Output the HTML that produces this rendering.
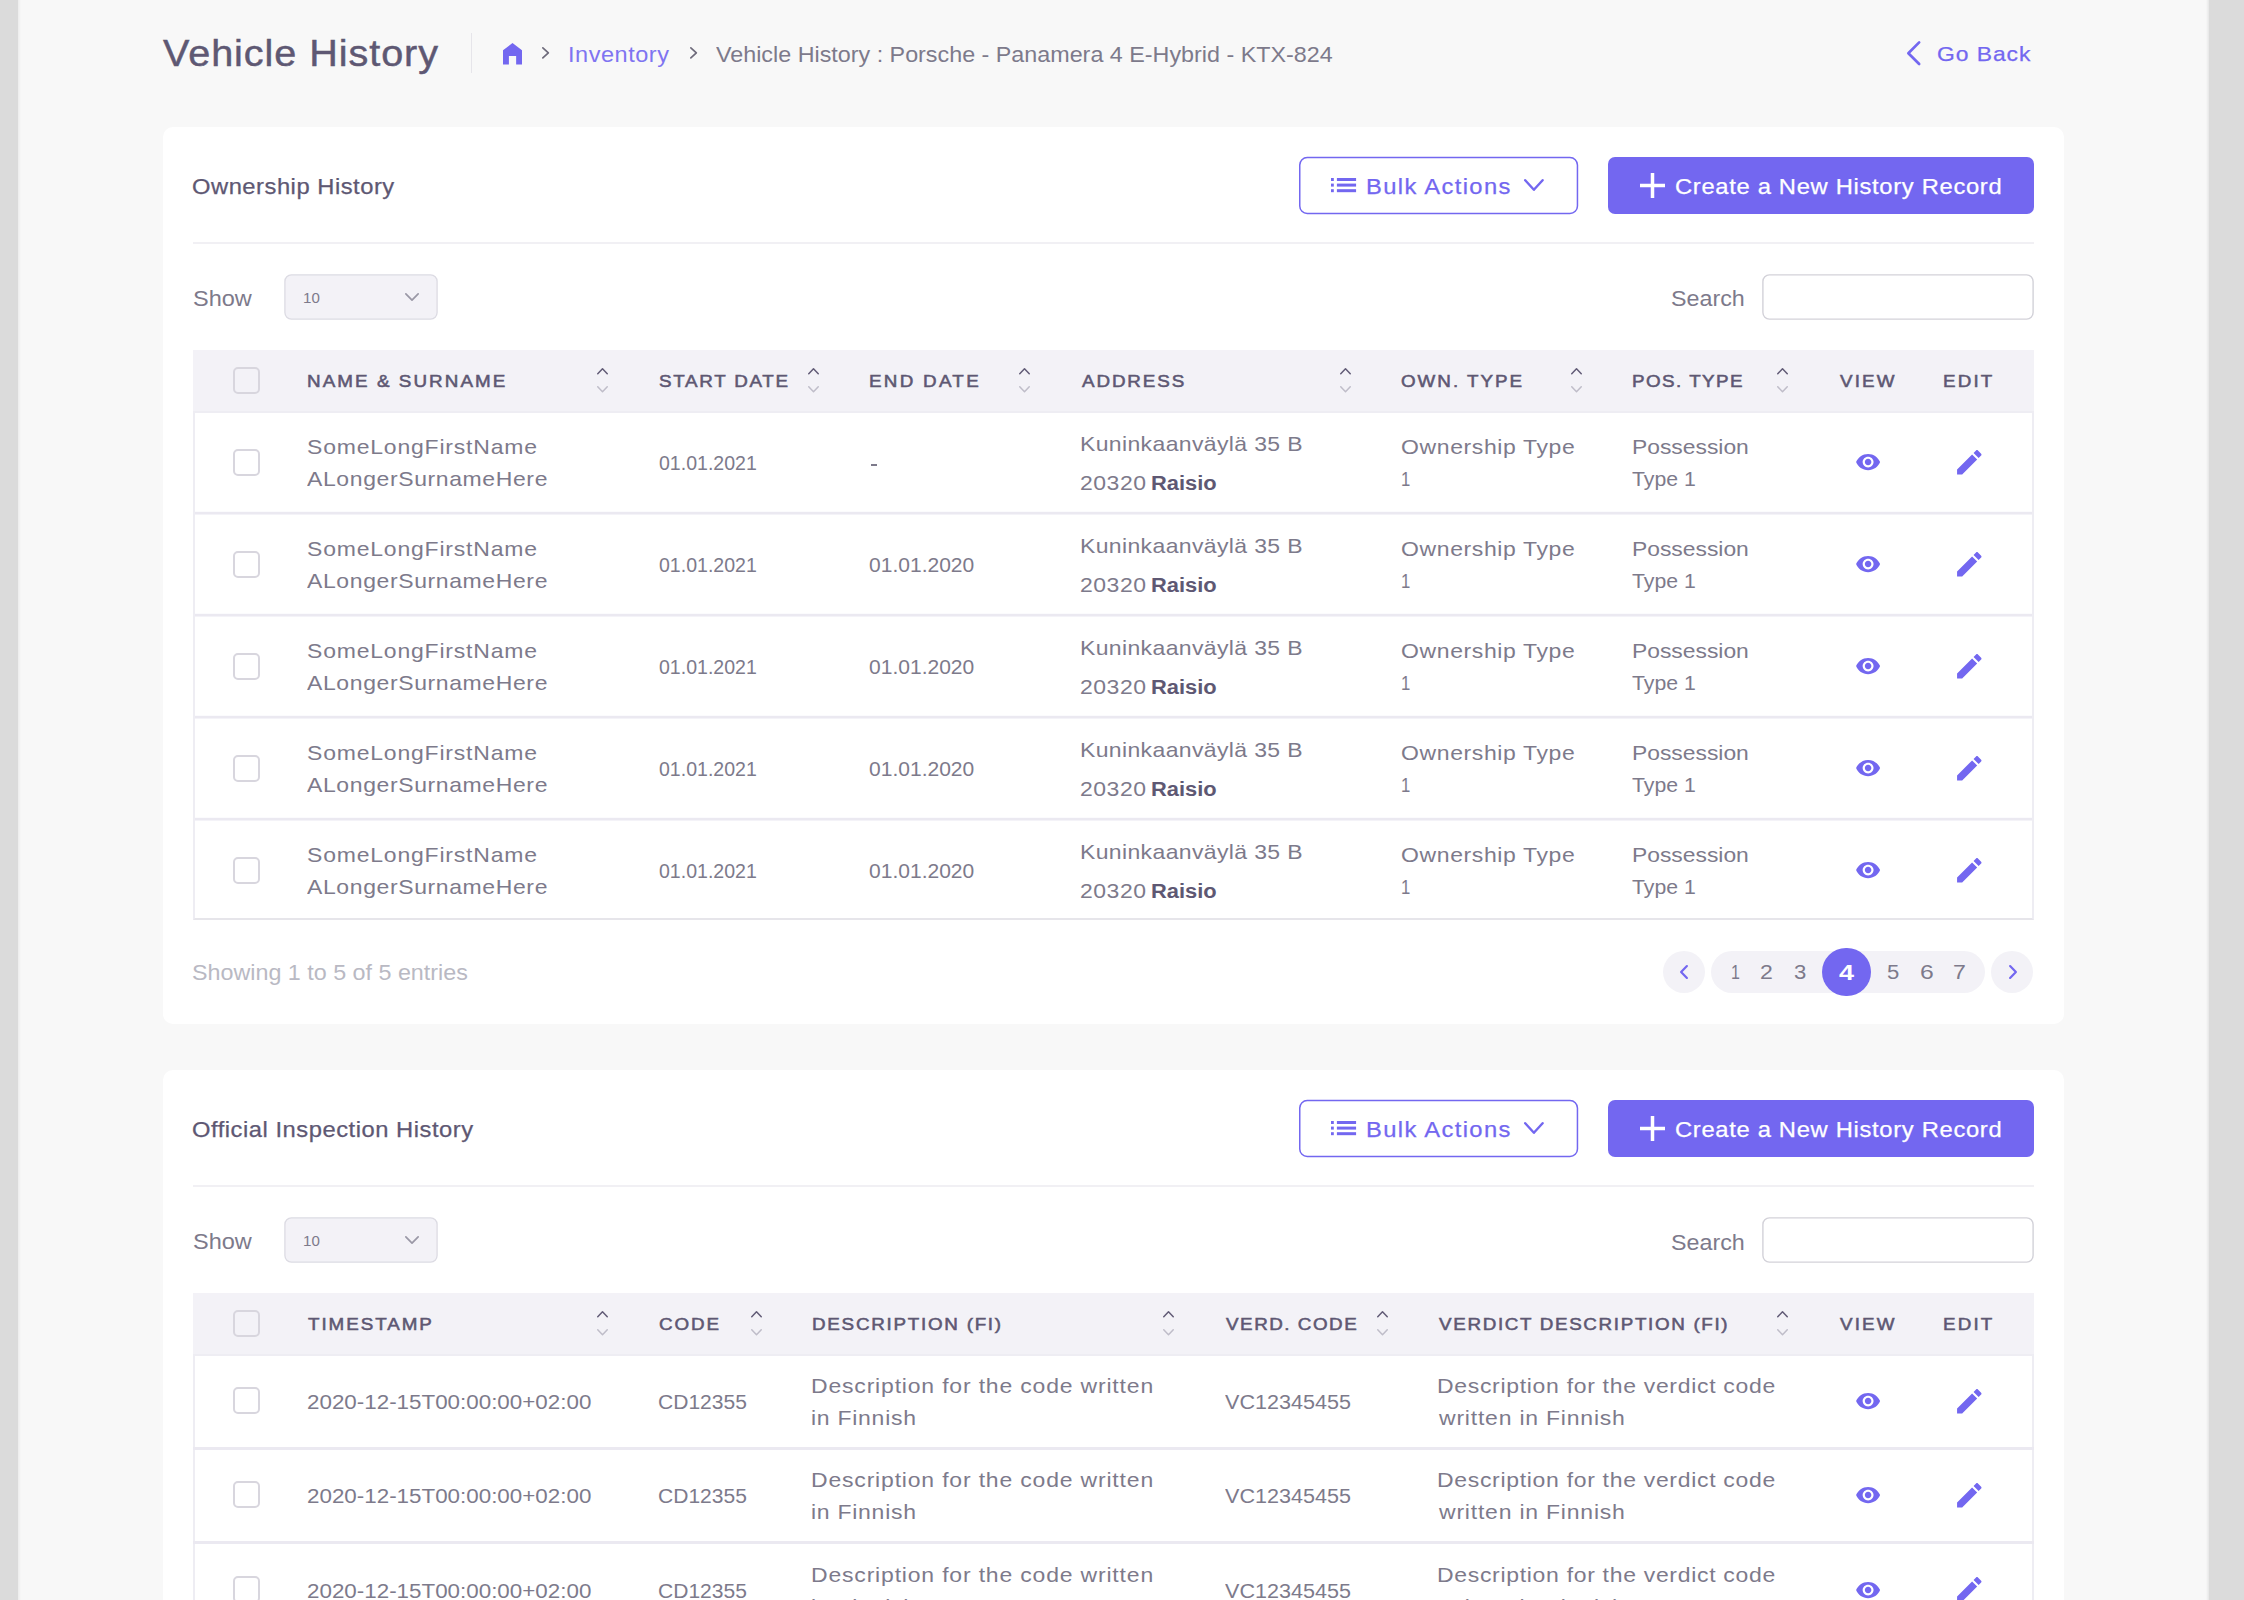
<!DOCTYPE html>
<html><head><meta charset="utf-8"><title>Vehicle History</title>
<style>
html,body{margin:0;padding:0;}
body{width:2244px;height:1600px;overflow:hidden;position:relative;background:#f8f8f8;font-family:"Liberation Sans",sans-serif;}
#p{position:absolute;left:0;top:0;width:2244px;height:1600px;overflow:hidden;}
#p>div,#p>svg,#p>span{position:absolute;display:block;}
.t{white-space:nowrap;line-height:1;transform-origin:0 50%;}
svg{overflow:visible;}
</style></head><body><div id="p">
<div style="left:0px;top:0px;width:18px;height:1600px;background:#dbdbdb;"></div>
<div style="left:2208.5px;top:0px;width:35.5px;height:1600px;background:#dbdbdb;"></div>
<div style="left:18px;top:0px;width:3px;height:1600px;background:linear-gradient(90deg,#ececec,#f8f8f8);"></div>
<div style="left:2205.5px;top:0px;width:3.0px;height:1600px;background:linear-gradient(90deg,#f8f8f8,#e6e6e6);"></div>
<span class="t" style="left:163.08px;top:36.00px;font-size:36px;color:#5e5873;font-weight:400;letter-spacing:0.852px;transform:scaleX(1.1000);-webkit-text-stroke:0.45px #5e5873;">Vehicle History</span>
<div style="left:470.5px;top:32.5px;width:1.5px;height:40.0px;background:#e6e5ea;"></div>
<svg style="left:503px;top:42.6px;" width="19" height="21.4" viewBox="0 0 19 21.4"><path d="M9.5,0 L19,7.2 V21.4 H13.15 V13 H5.9 V21.4 H0 V7.2 Z" fill="#7367f0"/></svg>
<svg style="left:542.4px;top:47.3px;" width="7.2000000000000455" height="11.800000000000004" viewBox="0 0 7.2000000000000455 11.800000000000004"><path d="M0.85,0.85 L6.350000000000046,5.900000000000002 L0.85,10.950000000000005" fill="none" stroke="#6e6b7b" stroke-width="1.7" stroke-linecap="round" stroke-linejoin="round"/></svg>
<span class="t" style="left:568.40px;top:45.00px;font-size:21.4px;color:#7f74f1;font-weight:400;letter-spacing:0.478px;transform:scaleX(1.1000);">Inventory</span>
<svg style="left:689.6px;top:47.3px;" width="7.199999999999932" height="11.800000000000004" viewBox="0 0 7.199999999999932 11.800000000000004"><path d="M0.85,0.85 L6.349999999999932,5.900000000000002 L0.85,10.950000000000005" fill="none" stroke="#6e6b7b" stroke-width="1.7" stroke-linecap="round" stroke-linejoin="round"/></svg>
<span class="t" style="left:715.89px;top:44.00px;font-size:21.6px;color:#7d7a8b;font-weight:400;letter-spacing:0.000px;transform:scaleX(1.0794);">Vehicle History : Porsche - Panamera 4 E-Hybrid - KTX-824</span>
<svg style="left:1907px;top:41px;" width="13.5" height="24.400000000000006" viewBox="0 0 13.5 24.400000000000006"><path d="M12.15,1.35 L1.35,12.200000000000003 L12.15,23.050000000000004" fill="none" stroke="#7367f0" stroke-width="2.7" stroke-linecap="round" stroke-linejoin="round"/></svg>
<span class="t" style="left:1936.70px;top:44.00px;font-size:20.8px;color:#7367f0;font-weight:400;letter-spacing:0.867px;transform:scaleX(1.1000);-webkit-text-stroke:0.25px #7367f0;">Go Back</span>
<div style="left:163px;top:126.5px;width:1901px;height:897.0px;background:#fff;border-radius:10px;"></div>
<span class="t" style="left:191.90px;top:176.00px;font-size:21.6px;color:#5e5873;font-weight:400;letter-spacing:0.464px;transform:scaleX(1.1000);-webkit-text-stroke:0.25px #5e5873;">Ownership History</span>
<svg style="left:1299px;top:157px;" width="279" height="57" viewBox="0 0 279 57"><rect x="0.75" y="0.6" width="277.7" height="55.8" rx="7.5" fill="#fff" stroke="#7367f0" stroke-width="1.5"/></svg>
<svg style="left:1331px;top:178.4px;" width="25.1" height="14.2" viewBox="0 0 25.1 14.2"><rect x="0" y="0" width="2.8" height="3" fill="#7367f0"/><rect x="5.9" y="0" width="19.2" height="3" fill="#7367f0"/><rect x="0" y="5.6" width="2.8" height="3" fill="#7367f0"/><rect x="5.9" y="5.6" width="19.2" height="3" fill="#7367f0"/><rect x="0" y="11.2" width="2.8" height="3" fill="#7367f0"/><rect x="5.9" y="11.2" width="19.2" height="3" fill="#7367f0"/></svg>
<span class="t" style="left:1366.02px;top:176.00px;font-size:21.6px;color:#7367f0;font-weight:400;letter-spacing:1.239px;transform:scaleX(1.1000);-webkit-text-stroke:0.25px #7367f0;">Bulk Actions</span>
<svg style="left:1524px;top:179.3px;" width="19.799999999999955" height="12.0" viewBox="0 0 19.799999999999955 12.0"><path d="M1.2,1.2 L9.899999999999977,10.8 L18.599999999999955,1.2" fill="none" stroke="#7367f0" stroke-width="2.4" stroke-linecap="round" stroke-linejoin="round"/></svg>
<div style="left:1608px;top:157px;width:426px;height:57px;border-radius:7px;background:#7367f0;"></div>
<svg style="left:1639.6px;top:172.8px;" width="25" height="25" viewBox="0 0 25 25"><rect x="10.75" y="0" width="3.5" height="25" fill="#fff"/><rect x="0" y="10.75" width="25" height="3.5" fill="#fff"/></svg>
<span class="t" style="left:1674.79px;top:176.00px;font-size:21.6px;color:#fff;font-weight:400;letter-spacing:0.621px;transform:scaleX(1.1000);-webkit-text-stroke:0.25px #fff;">Create a New History Record</span>
<div style="left:193px;top:242px;width:1841px;height:2px;background:#f1f0f4;"></div>
<span class="t" style="left:192.91px;top:288.00px;font-size:21.6px;color:#7d7a8b;font-weight:400;letter-spacing:-0.000px;transform:scaleX(1.0887);">Show</span>
<svg style="left:284px;top:274px;" width="154" height="46" viewBox="0 0 154 46"><rect x="0.9" y="0.9" width="152.2" height="44.2" rx="6.5" fill="#f3f2f7" stroke="#dcdbe3" stroke-width="1.3"/></svg>
<span class="t" style="left:302.83px;top:290.00px;font-size:15.5px;color:#7d7a8b;font-weight:400;letter-spacing:0.000px;transform:scaleX(0.9740);">10</span>
<svg style="left:405px;top:293.2px;" width="14" height="8.0" viewBox="0 0 14 8.0"><path d="M0.85,0.85 L7.0,7.15 L13.15,0.85" fill="none" stroke="#9a98a6" stroke-width="1.7" stroke-linecap="round" stroke-linejoin="round"/></svg>
<span class="t" style="left:1671.42px;top:288.00px;font-size:21.6px;color:#7d7a8b;font-weight:400;letter-spacing:0.000px;transform:scaleX(1.0773);">Search</span>
<svg style="left:1762px;top:274px;" width="272" height="46" viewBox="0 0 272 46"><rect x="0.9" y="0.9" width="270.2" height="44.2" rx="6.5" fill="#fff" stroke="#d3d2d9" stroke-width="1.4"/></svg>
<div style="left:193px;top:412px;width:1841px;height:508px;box-sizing:border-box;border:2px solid #eeedf3;border-top:none;border-bottom-color:#e6e5ea;background:#fff;"></div>
<div style="left:193px;top:350px;width:1841px;height:62px;background:#f3f2f7;"></div>
<div style="left:193px;top:410.5px;width:1841px;height:2.0px;background:#eeedf3;"></div>
<div style="left:233px;top:367px;width:27px;height:27px;box-sizing:border-box;border:2px solid #d8d6de;border-radius:5px;background:transparent;"></div>
<span class="t" style="left:307.26px;top:373.00px;font-size:17.1px;color:#5e5873;font-weight:400;letter-spacing:1.883px;transform:scaleX(1.1000);-webkit-text-stroke:0.55px #5e5873;">NAME &amp; SURNAME</span>
<svg style="left:596.5px;top:368.3px;" width="11.0" height="6.5" viewBox="0 0 11.0 6.5"><path d="M0.75,5.75 L5.5,0.75 L10.25,5.75" fill="none" stroke="#625c77" stroke-width="1.5" stroke-linecap="round" stroke-linejoin="round"/></svg>
<svg style="left:596.5px;top:386.2px;" width="11.0" height="6.5" viewBox="0 0 11.0 6.5"><path d="M0.75,0.75 L5.5,5.75 L10.25,0.75" fill="none" stroke="#bfbdc9" stroke-width="1.5" stroke-linecap="round" stroke-linejoin="round"/></svg>
<span class="t" style="left:658.92px;top:373.00px;font-size:17.1px;color:#5e5873;font-weight:400;letter-spacing:1.569px;transform:scaleX(1.1000);-webkit-text-stroke:0.55px #5e5873;">START DATE</span>
<svg style="left:808.0px;top:368.3px;" width="11.0" height="6.5" viewBox="0 0 11.0 6.5"><path d="M0.75,5.75 L5.5,0.75 L10.25,5.75" fill="none" stroke="#625c77" stroke-width="1.5" stroke-linecap="round" stroke-linejoin="round"/></svg>
<svg style="left:808.0px;top:386.2px;" width="11.0" height="6.5" viewBox="0 0 11.0 6.5"><path d="M0.75,0.75 L5.5,5.75 L10.25,0.75" fill="none" stroke="#bfbdc9" stroke-width="1.5" stroke-linecap="round" stroke-linejoin="round"/></svg>
<span class="t" style="left:869.26px;top:373.00px;font-size:17.1px;color:#5e5873;font-weight:400;letter-spacing:2.077px;transform:scaleX(1.1000);-webkit-text-stroke:0.55px #5e5873;">END DATE</span>
<svg style="left:1019.0px;top:368.3px;" width="11.0" height="6.5" viewBox="0 0 11.0 6.5"><path d="M0.75,5.75 L5.5,0.75 L10.25,5.75" fill="none" stroke="#625c77" stroke-width="1.5" stroke-linecap="round" stroke-linejoin="round"/></svg>
<svg style="left:1019.0px;top:386.2px;" width="11.0" height="6.5" viewBox="0 0 11.0 6.5"><path d="M0.75,0.75 L5.5,5.75 L10.25,0.75" fill="none" stroke="#bfbdc9" stroke-width="1.5" stroke-linecap="round" stroke-linejoin="round"/></svg>
<span class="t" style="left:1081.80px;top:373.00px;font-size:17.1px;color:#5e5873;font-weight:400;letter-spacing:1.714px;transform:scaleX(1.1000);-webkit-text-stroke:0.55px #5e5873;">ADDRESS</span>
<svg style="left:1339.5px;top:368.3px;" width="11.0" height="6.5" viewBox="0 0 11.0 6.5"><path d="M0.75,5.75 L5.5,0.75 L10.25,5.75" fill="none" stroke="#625c77" stroke-width="1.5" stroke-linecap="round" stroke-linejoin="round"/></svg>
<svg style="left:1339.5px;top:386.2px;" width="11.0" height="6.5" viewBox="0 0 11.0 6.5"><path d="M0.75,0.75 L5.5,5.75 L10.25,0.75" fill="none" stroke="#bfbdc9" stroke-width="1.5" stroke-linecap="round" stroke-linejoin="round"/></svg>
<span class="t" style="left:1400.92px;top:373.00px;font-size:17.1px;color:#5e5873;font-weight:400;letter-spacing:1.806px;transform:scaleX(1.1000);-webkit-text-stroke:0.55px #5e5873;">OWN. TYPE</span>
<svg style="left:1570.5px;top:368.3px;" width="11.0" height="6.5" viewBox="0 0 11.0 6.5"><path d="M0.75,5.75 L5.5,0.75 L10.25,5.75" fill="none" stroke="#625c77" stroke-width="1.5" stroke-linecap="round" stroke-linejoin="round"/></svg>
<svg style="left:1570.5px;top:386.2px;" width="11.0" height="6.5" viewBox="0 0 11.0 6.5"><path d="M0.75,0.75 L5.5,5.75 L10.25,0.75" fill="none" stroke="#bfbdc9" stroke-width="1.5" stroke-linecap="round" stroke-linejoin="round"/></svg>
<span class="t" style="left:1632.26px;top:373.00px;font-size:17.1px;color:#5e5873;font-weight:400;letter-spacing:1.331px;transform:scaleX(1.1000);-webkit-text-stroke:0.55px #5e5873;">POS. TYPE</span>
<svg style="left:1777.0px;top:368.3px;" width="11.0" height="6.5" viewBox="0 0 11.0 6.5"><path d="M0.75,5.75 L5.5,0.75 L10.25,5.75" fill="none" stroke="#625c77" stroke-width="1.5" stroke-linecap="round" stroke-linejoin="round"/></svg>
<svg style="left:1777.0px;top:386.2px;" width="11.0" height="6.5" viewBox="0 0 11.0 6.5"><path d="M0.75,0.75 L5.5,5.75 L10.25,0.75" fill="none" stroke="#bfbdc9" stroke-width="1.5" stroke-linecap="round" stroke-linejoin="round"/></svg>
<span class="t" style="left:1839.69px;top:373.00px;font-size:17.1px;color:#5e5873;font-weight:400;letter-spacing:1.952px;transform:scaleX(1.1000);-webkit-text-stroke:0.55px #5e5873;">VIEW</span>
<span class="t" style="left:1943.26px;top:373.00px;font-size:17.1px;color:#5e5873;font-weight:400;letter-spacing:1.964px;transform:scaleX(1.1000);-webkit-text-stroke:0.55px #5e5873;">EDIT</span>
<div style="left:195px;top:511px;width:1837px;height:4px;background:linear-gradient(180deg,#fbfbfd 0,#fbfbfd 25%,#ebe9f1 25%,#ebe9f1 75%,#f4f3f8 75%);"></div>
<div style="left:233px;top:449px;width:27px;height:27px;box-sizing:border-box;border:2px solid #d8d6de;border-radius:5px;background:#fff;"></div>
<span class="t" style="left:306.50px;top:437.00px;font-size:20.9px;color:#7d7a8b;font-weight:400;letter-spacing:0.730px;transform:scaleX(1.1000);">SomeLongFirstName</span>
<span class="t" style="left:307.49px;top:469.00px;font-size:20.9px;color:#7d7a8b;font-weight:400;letter-spacing:0.561px;transform:scaleX(1.1000);">ALongerSurnameHere</span>
<span class="t" style="left:658.55px;top:453.00px;font-size:20.9px;color:#7d7a8b;font-weight:400;letter-spacing:0.000px;transform:scaleX(0.9358);">01.01.2021</span>
<div style="left:870.8px;top:464px;width:6.2000000000000455px;height:1.6000000000000227px;background:#7d7a8b;"></div>
<span class="t" style="left:1079.63px;top:434.00px;font-size:20.9px;color:#7d7a8b;font-weight:400;letter-spacing:0.336px;transform:scaleX(1.1000);">Kuninkaanväylä 35 B</span>
<span class="t" style="left:1079.90px;top:473.00px;font-size:20.9px;color:#7d7a8b;font-weight:400;letter-spacing:0.470px;transform:scaleX(1.1000);">20320</span>
<span class="t" style="left:1151.03px;top:473.00px;font-size:20.9px;color:#5e5873;font-weight:700;letter-spacing:0.000px;transform:scaleX(1.0479);">Raisio</span>
<span class="t" style="left:1400.60px;top:437.00px;font-size:20.9px;color:#7d7a8b;font-weight:400;letter-spacing:0.569px;transform:scaleX(1.1000);">Ownership Type</span>
<span class="t" style="left:1400.72px;top:469.00px;font-size:20.9px;color:#7d7a8b;font-weight:400;letter-spacing:0.000px;transform:scaleX(0.8000);">1</span>
<span class="t" style="left:1632.14px;top:437.00px;font-size:20.9px;color:#7d7a8b;font-weight:400;letter-spacing:0.000px;transform:scaleX(1.0934);">Possession</span>
<span class="t" style="left:1631.89px;top:469.00px;font-size:20.9px;color:#7d7a8b;font-weight:400;letter-spacing:-0.000px;transform:scaleX(1.0163);">Type 1</span>
<svg style="left:1854.9px;top:448.9px;" width="26.2" height="26.2" viewBox="0 0 24 24"><path d="M12 4.5C7 4.5 2.73 7.61 1 12c1.73 4.39 6 7.5 11 7.5s9.27-3.11 11-7.5c-1.73-4.39-6-7.5-11-7.5zM12 17c-2.76 0-5-2.24-5-5s2.24-5 5-5 5 2.24 5 5-2.24 5-5 5zm0-8c-1.66 0-3 1.34-3 3s1.34 3 3 3 3-1.34 3-3-1.34-3-3-3z" fill="#7367f0"/></svg>
<svg style="left:1952.7px;top:445.7px;" width="32.6" height="32.6" viewBox="0 0 24 24"><path d="M3 17.25V21h3.75L17.81 9.94l-3.75-3.75L3 17.25zM20.71 7.04c.39-.39.39-1.02 0-1.41l-2.34-2.34c-.39-.39-1.02-.39-1.41 0l-1.83 1.83 3.75 3.75 1.83-1.83z" fill="#7367f0"/></svg>
<div style="left:195px;top:613px;width:1837px;height:4px;background:linear-gradient(180deg,#fbfbfd 0,#fbfbfd 25%,#ebe9f1 25%,#ebe9f1 75%,#f4f3f8 75%);"></div>
<div style="left:233px;top:551px;width:27px;height:27px;box-sizing:border-box;border:2px solid #d8d6de;border-radius:5px;background:#fff;"></div>
<span class="t" style="left:306.50px;top:539.00px;font-size:20.9px;color:#7d7a8b;font-weight:400;letter-spacing:0.730px;transform:scaleX(1.1000);">SomeLongFirstName</span>
<span class="t" style="left:307.49px;top:571.00px;font-size:20.9px;color:#7d7a8b;font-weight:400;letter-spacing:0.561px;transform:scaleX(1.1000);">ALongerSurnameHere</span>
<span class="t" style="left:658.55px;top:555.00px;font-size:20.9px;color:#7d7a8b;font-weight:400;letter-spacing:0.000px;transform:scaleX(0.9358);">01.01.2021</span>
<span class="t" style="left:869.49px;top:555.00px;font-size:20.9px;color:#7d7a8b;font-weight:400;letter-spacing:-0.000px;transform:scaleX(1.0068);">01.01.2020</span>
<span class="t" style="left:1079.63px;top:536.00px;font-size:20.9px;color:#7d7a8b;font-weight:400;letter-spacing:0.336px;transform:scaleX(1.1000);">Kuninkaanväylä 35 B</span>
<span class="t" style="left:1079.90px;top:575.00px;font-size:20.9px;color:#7d7a8b;font-weight:400;letter-spacing:0.470px;transform:scaleX(1.1000);">20320</span>
<span class="t" style="left:1151.03px;top:575.00px;font-size:20.9px;color:#5e5873;font-weight:700;letter-spacing:0.000px;transform:scaleX(1.0479);">Raisio</span>
<span class="t" style="left:1400.60px;top:539.00px;font-size:20.9px;color:#7d7a8b;font-weight:400;letter-spacing:0.569px;transform:scaleX(1.1000);">Ownership Type</span>
<span class="t" style="left:1400.72px;top:571.00px;font-size:20.9px;color:#7d7a8b;font-weight:400;letter-spacing:0.000px;transform:scaleX(0.8000);">1</span>
<span class="t" style="left:1632.14px;top:539.00px;font-size:20.9px;color:#7d7a8b;font-weight:400;letter-spacing:0.000px;transform:scaleX(1.0934);">Possession</span>
<span class="t" style="left:1631.89px;top:571.00px;font-size:20.9px;color:#7d7a8b;font-weight:400;letter-spacing:-0.000px;transform:scaleX(1.0163);">Type 1</span>
<svg style="left:1854.9px;top:550.9px;" width="26.2" height="26.2" viewBox="0 0 24 24"><path d="M12 4.5C7 4.5 2.73 7.61 1 12c1.73 4.39 6 7.5 11 7.5s9.27-3.11 11-7.5c-1.73-4.39-6-7.5-11-7.5zM12 17c-2.76 0-5-2.24-5-5s2.24-5 5-5 5 2.24 5 5-2.24 5-5 5zm0-8c-1.66 0-3 1.34-3 3s1.34 3 3 3 3-1.34 3-3-1.34-3-3-3z" fill="#7367f0"/></svg>
<svg style="left:1952.7px;top:547.7px;" width="32.6" height="32.6" viewBox="0 0 24 24"><path d="M3 17.25V21h3.75L17.81 9.94l-3.75-3.75L3 17.25zM20.71 7.04c.39-.39.39-1.02 0-1.41l-2.34-2.34c-.39-.39-1.02-.39-1.41 0l-1.83 1.83 3.75 3.75 1.83-1.83z" fill="#7367f0"/></svg>
<div style="left:195px;top:715px;width:1837px;height:4px;background:linear-gradient(180deg,#fbfbfd 0,#fbfbfd 25%,#ebe9f1 25%,#ebe9f1 75%,#f4f3f8 75%);"></div>
<div style="left:233px;top:653px;width:27px;height:27px;box-sizing:border-box;border:2px solid #d8d6de;border-radius:5px;background:#fff;"></div>
<span class="t" style="left:306.50px;top:641.00px;font-size:20.9px;color:#7d7a8b;font-weight:400;letter-spacing:0.730px;transform:scaleX(1.1000);">SomeLongFirstName</span>
<span class="t" style="left:307.49px;top:673.00px;font-size:20.9px;color:#7d7a8b;font-weight:400;letter-spacing:0.561px;transform:scaleX(1.1000);">ALongerSurnameHere</span>
<span class="t" style="left:658.55px;top:657.00px;font-size:20.9px;color:#7d7a8b;font-weight:400;letter-spacing:0.000px;transform:scaleX(0.9358);">01.01.2021</span>
<span class="t" style="left:869.49px;top:657.00px;font-size:20.9px;color:#7d7a8b;font-weight:400;letter-spacing:-0.000px;transform:scaleX(1.0068);">01.01.2020</span>
<span class="t" style="left:1079.63px;top:638.00px;font-size:20.9px;color:#7d7a8b;font-weight:400;letter-spacing:0.336px;transform:scaleX(1.1000);">Kuninkaanväylä 35 B</span>
<span class="t" style="left:1079.90px;top:677.00px;font-size:20.9px;color:#7d7a8b;font-weight:400;letter-spacing:0.470px;transform:scaleX(1.1000);">20320</span>
<span class="t" style="left:1151.03px;top:677.00px;font-size:20.9px;color:#5e5873;font-weight:700;letter-spacing:0.000px;transform:scaleX(1.0479);">Raisio</span>
<span class="t" style="left:1400.60px;top:641.00px;font-size:20.9px;color:#7d7a8b;font-weight:400;letter-spacing:0.569px;transform:scaleX(1.1000);">Ownership Type</span>
<span class="t" style="left:1400.72px;top:673.00px;font-size:20.9px;color:#7d7a8b;font-weight:400;letter-spacing:0.000px;transform:scaleX(0.8000);">1</span>
<span class="t" style="left:1632.14px;top:641.00px;font-size:20.9px;color:#7d7a8b;font-weight:400;letter-spacing:0.000px;transform:scaleX(1.0934);">Possession</span>
<span class="t" style="left:1631.89px;top:673.00px;font-size:20.9px;color:#7d7a8b;font-weight:400;letter-spacing:-0.000px;transform:scaleX(1.0163);">Type 1</span>
<svg style="left:1854.9px;top:652.9px;" width="26.2" height="26.2" viewBox="0 0 24 24"><path d="M12 4.5C7 4.5 2.73 7.61 1 12c1.73 4.39 6 7.5 11 7.5s9.27-3.11 11-7.5c-1.73-4.39-6-7.5-11-7.5zM12 17c-2.76 0-5-2.24-5-5s2.24-5 5-5 5 2.24 5 5-2.24 5-5 5zm0-8c-1.66 0-3 1.34-3 3s1.34 3 3 3 3-1.34 3-3-1.34-3-3-3z" fill="#7367f0"/></svg>
<svg style="left:1952.7px;top:649.7px;" width="32.6" height="32.6" viewBox="0 0 24 24"><path d="M3 17.25V21h3.75L17.81 9.94l-3.75-3.75L3 17.25zM20.71 7.04c.39-.39.39-1.02 0-1.41l-2.34-2.34c-.39-.39-1.02-.39-1.41 0l-1.83 1.83 3.75 3.75 1.83-1.83z" fill="#7367f0"/></svg>
<div style="left:195px;top:817px;width:1837px;height:4px;background:linear-gradient(180deg,#fbfbfd 0,#fbfbfd 25%,#ebe9f1 25%,#ebe9f1 75%,#f4f3f8 75%);"></div>
<div style="left:233px;top:755px;width:27px;height:27px;box-sizing:border-box;border:2px solid #d8d6de;border-radius:5px;background:#fff;"></div>
<span class="t" style="left:306.50px;top:743.00px;font-size:20.9px;color:#7d7a8b;font-weight:400;letter-spacing:0.730px;transform:scaleX(1.1000);">SomeLongFirstName</span>
<span class="t" style="left:307.49px;top:775.00px;font-size:20.9px;color:#7d7a8b;font-weight:400;letter-spacing:0.561px;transform:scaleX(1.1000);">ALongerSurnameHere</span>
<span class="t" style="left:658.55px;top:759.00px;font-size:20.9px;color:#7d7a8b;font-weight:400;letter-spacing:0.000px;transform:scaleX(0.9358);">01.01.2021</span>
<span class="t" style="left:869.49px;top:759.00px;font-size:20.9px;color:#7d7a8b;font-weight:400;letter-spacing:-0.000px;transform:scaleX(1.0068);">01.01.2020</span>
<span class="t" style="left:1079.63px;top:740.00px;font-size:20.9px;color:#7d7a8b;font-weight:400;letter-spacing:0.336px;transform:scaleX(1.1000);">Kuninkaanväylä 35 B</span>
<span class="t" style="left:1079.90px;top:779.00px;font-size:20.9px;color:#7d7a8b;font-weight:400;letter-spacing:0.470px;transform:scaleX(1.1000);">20320</span>
<span class="t" style="left:1151.03px;top:779.00px;font-size:20.9px;color:#5e5873;font-weight:700;letter-spacing:0.000px;transform:scaleX(1.0479);">Raisio</span>
<span class="t" style="left:1400.60px;top:743.00px;font-size:20.9px;color:#7d7a8b;font-weight:400;letter-spacing:0.569px;transform:scaleX(1.1000);">Ownership Type</span>
<span class="t" style="left:1400.72px;top:775.00px;font-size:20.9px;color:#7d7a8b;font-weight:400;letter-spacing:0.000px;transform:scaleX(0.8000);">1</span>
<span class="t" style="left:1632.14px;top:743.00px;font-size:20.9px;color:#7d7a8b;font-weight:400;letter-spacing:0.000px;transform:scaleX(1.0934);">Possession</span>
<span class="t" style="left:1631.89px;top:775.00px;font-size:20.9px;color:#7d7a8b;font-weight:400;letter-spacing:-0.000px;transform:scaleX(1.0163);">Type 1</span>
<svg style="left:1854.9px;top:754.9px;" width="26.2" height="26.2" viewBox="0 0 24 24"><path d="M12 4.5C7 4.5 2.73 7.61 1 12c1.73 4.39 6 7.5 11 7.5s9.27-3.11 11-7.5c-1.73-4.39-6-7.5-11-7.5zM12 17c-2.76 0-5-2.24-5-5s2.24-5 5-5 5 2.24 5 5-2.24 5-5 5zm0-8c-1.66 0-3 1.34-3 3s1.34 3 3 3 3-1.34 3-3-1.34-3-3-3z" fill="#7367f0"/></svg>
<svg style="left:1952.7px;top:751.7px;" width="32.6" height="32.6" viewBox="0 0 24 24"><path d="M3 17.25V21h3.75L17.81 9.94l-3.75-3.75L3 17.25zM20.71 7.04c.39-.39.39-1.02 0-1.41l-2.34-2.34c-.39-.39-1.02-.39-1.41 0l-1.83 1.83 3.75 3.75 1.83-1.83z" fill="#7367f0"/></svg>
<div style="left:233px;top:857px;width:27px;height:27px;box-sizing:border-box;border:2px solid #d8d6de;border-radius:5px;background:#fff;"></div>
<span class="t" style="left:306.50px;top:845.00px;font-size:20.9px;color:#7d7a8b;font-weight:400;letter-spacing:0.730px;transform:scaleX(1.1000);">SomeLongFirstName</span>
<span class="t" style="left:307.49px;top:877.00px;font-size:20.9px;color:#7d7a8b;font-weight:400;letter-spacing:0.561px;transform:scaleX(1.1000);">ALongerSurnameHere</span>
<span class="t" style="left:658.55px;top:861.00px;font-size:20.9px;color:#7d7a8b;font-weight:400;letter-spacing:0.000px;transform:scaleX(0.9358);">01.01.2021</span>
<span class="t" style="left:869.49px;top:861.00px;font-size:20.9px;color:#7d7a8b;font-weight:400;letter-spacing:-0.000px;transform:scaleX(1.0068);">01.01.2020</span>
<span class="t" style="left:1079.63px;top:842.00px;font-size:20.9px;color:#7d7a8b;font-weight:400;letter-spacing:0.336px;transform:scaleX(1.1000);">Kuninkaanväylä 35 B</span>
<span class="t" style="left:1079.90px;top:881.00px;font-size:20.9px;color:#7d7a8b;font-weight:400;letter-spacing:0.470px;transform:scaleX(1.1000);">20320</span>
<span class="t" style="left:1151.03px;top:881.00px;font-size:20.9px;color:#5e5873;font-weight:700;letter-spacing:0.000px;transform:scaleX(1.0479);">Raisio</span>
<span class="t" style="left:1400.60px;top:845.00px;font-size:20.9px;color:#7d7a8b;font-weight:400;letter-spacing:0.569px;transform:scaleX(1.1000);">Ownership Type</span>
<span class="t" style="left:1400.72px;top:877.00px;font-size:20.9px;color:#7d7a8b;font-weight:400;letter-spacing:0.000px;transform:scaleX(0.8000);">1</span>
<span class="t" style="left:1632.14px;top:845.00px;font-size:20.9px;color:#7d7a8b;font-weight:400;letter-spacing:0.000px;transform:scaleX(1.0934);">Possession</span>
<span class="t" style="left:1631.89px;top:877.00px;font-size:20.9px;color:#7d7a8b;font-weight:400;letter-spacing:-0.000px;transform:scaleX(1.0163);">Type 1</span>
<svg style="left:1854.9px;top:856.9px;" width="26.2" height="26.2" viewBox="0 0 24 24"><path d="M12 4.5C7 4.5 2.73 7.61 1 12c1.73 4.39 6 7.5 11 7.5s9.27-3.11 11-7.5c-1.73-4.39-6-7.5-11-7.5zM12 17c-2.76 0-5-2.24-5-5s2.24-5 5-5 5 2.24 5 5-2.24 5-5 5zm0-8c-1.66 0-3 1.34-3 3s1.34 3 3 3 3-1.34 3-3-1.34-3-3-3z" fill="#7367f0"/></svg>
<svg style="left:1952.7px;top:853.7px;" width="32.6" height="32.6" viewBox="0 0 24 24"><path d="M3 17.25V21h3.75L17.81 9.94l-3.75-3.75L3 17.25zM20.71 7.04c.39-.39.39-1.02 0-1.41l-2.34-2.34c-.39-.39-1.02-.39-1.41 0l-1.83 1.83 3.75 3.75 1.83-1.83z" fill="#7367f0"/></svg>
<span class="t" style="left:192.42px;top:962.00px;font-size:21.6px;color:#b9b9c3;font-weight:400;letter-spacing:-0.000px;transform:scaleX(1.0787);">Showing 1 to 5 of 5 entries</span>
<div style="left:1663px;top:951px;width:42px;height:42px;background:#f3f2f7;border-radius:21px;"></div>
<svg style="left:1679.5px;top:965px;" width="8.0" height="14" viewBox="0 0 8.0 14"><path d="M6.9,1.1 L1.1,7.0 L6.9,12.9" fill="none" stroke="#7367f0" stroke-width="2.2" stroke-linecap="round" stroke-linejoin="round"/></svg>
<div style="left:1711px;top:951px;width:274px;height:42px;background:#f3f2f7;border-radius:21px;"></div>
<div style="left:1991px;top:951px;width:42px;height:42px;background:#f3f2f7;border-radius:21px;"></div>
<svg style="left:2008.5px;top:965px;" width="8.0" height="14" viewBox="0 0 8.0 14"><path d="M1.1,1.1 L6.9,7.0 L1.1,12.9" fill="none" stroke="#7367f0" stroke-width="2.2" stroke-linecap="round" stroke-linejoin="round"/></svg>
<div style="left:1821.6px;top:947.5px;width:49.40000000000009px;height:48.5px;background:#7367f0;border-radius:25px;"></div>
<span class="t" style="left:1731.30px;top:962.00px;font-size:20px;color:#7d7a8b;font-weight:400;letter-spacing:0.000px;transform:scaleX(0.8000);">1</span>
<span class="t" style="left:1760.35px;top:962.00px;font-size:20px;color:#7d7a8b;font-weight:400;letter-spacing:0.000px;transform:scaleX(1.1538);">2</span>
<span class="t" style="left:1793.62px;top:962.00px;font-size:20px;color:#7d7a8b;font-weight:400;letter-spacing:0.000px;transform:scaleX(1.1053);">3</span>
<span class="t" style="left:1886.62px;top:962.00px;font-size:20px;color:#7d7a8b;font-weight:400;letter-spacing:0.000px;transform:scaleX(1.1053);">5</span>
<span class="t" style="left:1919.76px;top:962.00px;font-size:20px;color:#7d7a8b;font-weight:400;letter-spacing:0.000px;transform:scaleX(1.2366);">6</span>
<span class="t" style="left:1953.35px;top:962.00px;font-size:20px;color:#7d7a8b;font-weight:400;letter-spacing:0.000px;transform:scaleX(1.1538);">7</span>
<span class="t" style="left:1838.62px;top:962.00px;font-size:21.6px;color:#fff;font-weight:700;letter-spacing:0.000px;transform:scaleX(1.2500);">4</span>
<div style="left:163px;top:1069.5px;width:1901px;height:630.5px;background:#fff;border-radius:10px;"></div>
<span class="t" style="left:191.90px;top:1119.00px;font-size:21.6px;color:#5e5873;font-weight:400;letter-spacing:0.475px;transform:scaleX(1.1000);-webkit-text-stroke:0.25px #5e5873;">Official Inspection History</span>
<svg style="left:1299px;top:1100px;" width="279" height="57" viewBox="0 0 279 57"><rect x="0.75" y="0.6" width="277.7" height="55.8" rx="7.5" fill="#fff" stroke="#7367f0" stroke-width="1.5"/></svg>
<svg style="left:1331px;top:1121.4px;" width="25.1" height="14.2" viewBox="0 0 25.1 14.2"><rect x="0" y="0" width="2.8" height="3" fill="#7367f0"/><rect x="5.9" y="0" width="19.2" height="3" fill="#7367f0"/><rect x="0" y="5.6" width="2.8" height="3" fill="#7367f0"/><rect x="5.9" y="5.6" width="19.2" height="3" fill="#7367f0"/><rect x="0" y="11.2" width="2.8" height="3" fill="#7367f0"/><rect x="5.9" y="11.2" width="19.2" height="3" fill="#7367f0"/></svg>
<span class="t" style="left:1366.02px;top:1119.00px;font-size:21.6px;color:#7367f0;font-weight:400;letter-spacing:1.239px;transform:scaleX(1.1000);-webkit-text-stroke:0.25px #7367f0;">Bulk Actions</span>
<svg style="left:1524px;top:1122.3px;" width="19.799999999999955" height="12.0" viewBox="0 0 19.799999999999955 12.0"><path d="M1.2,1.2 L9.899999999999977,10.8 L18.599999999999955,1.2" fill="none" stroke="#7367f0" stroke-width="2.4" stroke-linecap="round" stroke-linejoin="round"/></svg>
<div style="left:1608px;top:1100px;width:426px;height:57px;border-radius:7px;background:#7367f0;"></div>
<svg style="left:1639.6px;top:1115.8px;" width="25" height="25" viewBox="0 0 25 25"><rect x="10.75" y="0" width="3.5" height="25" fill="#fff"/><rect x="0" y="10.75" width="25" height="3.5" fill="#fff"/></svg>
<span class="t" style="left:1674.79px;top:1119.00px;font-size:21.6px;color:#fff;font-weight:400;letter-spacing:0.621px;transform:scaleX(1.1000);-webkit-text-stroke:0.25px #fff;">Create a New History Record</span>
<div style="left:193px;top:1185px;width:1841px;height:2px;background:#f1f0f4;"></div>
<span class="t" style="left:192.91px;top:1231.00px;font-size:21.6px;color:#7d7a8b;font-weight:400;letter-spacing:-0.000px;transform:scaleX(1.0887);">Show</span>
<svg style="left:284px;top:1217px;" width="154" height="46" viewBox="0 0 154 46"><rect x="0.9" y="0.9" width="152.2" height="44.2" rx="6.5" fill="#f3f2f7" stroke="#dcdbe3" stroke-width="1.3"/></svg>
<span class="t" style="left:302.83px;top:1233.00px;font-size:15.5px;color:#7d7a8b;font-weight:400;letter-spacing:0.000px;transform:scaleX(0.9740);">10</span>
<svg style="left:405px;top:1236.2px;" width="14" height="8.0" viewBox="0 0 14 8.0"><path d="M0.85,0.85 L7.0,7.15 L13.15,0.85" fill="none" stroke="#9a98a6" stroke-width="1.7" stroke-linecap="round" stroke-linejoin="round"/></svg>
<span class="t" style="left:1671.42px;top:1232.00px;font-size:21.6px;color:#7d7a8b;font-weight:400;letter-spacing:0.000px;transform:scaleX(1.0773);">Search</span>
<svg style="left:1762px;top:1217px;" width="272" height="46" viewBox="0 0 272 46"><rect x="0.9" y="0.9" width="270.2" height="44.2" rx="6.5" fill="#fff" stroke="#d3d2d9" stroke-width="1.4"/></svg>
<div style="left:193px;top:1354px;width:1841px;height:346px;box-sizing:border-box;border:2px solid #eeedf3;border-top:none;background:#fff;"></div>
<div style="left:193px;top:1293px;width:1841px;height:62px;background:#f3f2f7;"></div>
<div style="left:193px;top:1353.5px;width:1841px;height:2.0px;background:#eeedf3;"></div>
<div style="left:233px;top:1310px;width:27px;height:27px;box-sizing:border-box;border:2px solid #d8d6de;border-radius:5px;background:transparent;"></div>
<span class="t" style="left:308.36px;top:1316.00px;font-size:17.1px;color:#5e5873;font-weight:400;letter-spacing:1.759px;transform:scaleX(1.1000);-webkit-text-stroke:0.55px #5e5873;">TIMESTAMP</span>
<svg style="left:596.5px;top:1311.3px;" width="11.0" height="6.5" viewBox="0 0 11.0 6.5"><path d="M0.75,5.75 L5.5,0.75 L10.25,5.75" fill="none" stroke="#625c77" stroke-width="1.5" stroke-linecap="round" stroke-linejoin="round"/></svg>
<svg style="left:596.5px;top:1329.2px;" width="11.0" height="6.5" viewBox="0 0 11.0 6.5"><path d="M0.75,0.75 L5.5,5.75 L10.25,0.75" fill="none" stroke="#bfbdc9" stroke-width="1.5" stroke-linecap="round" stroke-linejoin="round"/></svg>
<span class="t" style="left:658.81px;top:1316.00px;font-size:17.1px;color:#5e5873;font-weight:400;letter-spacing:1.764px;transform:scaleX(1.1000);-webkit-text-stroke:0.55px #5e5873;">CODE</span>
<svg style="left:750.5px;top:1311.3px;" width="11.0" height="6.5" viewBox="0 0 11.0 6.5"><path d="M0.75,5.75 L5.5,0.75 L10.25,5.75" fill="none" stroke="#625c77" stroke-width="1.5" stroke-linecap="round" stroke-linejoin="round"/></svg>
<svg style="left:750.5px;top:1329.2px;" width="11.0" height="6.5" viewBox="0 0 11.0 6.5"><path d="M0.75,0.75 L5.5,5.75 L10.25,0.75" fill="none" stroke="#bfbdc9" stroke-width="1.5" stroke-linecap="round" stroke-linejoin="round"/></svg>
<span class="t" style="left:812.26px;top:1316.00px;font-size:17.1px;color:#5e5873;font-weight:400;letter-spacing:1.584px;transform:scaleX(1.1000);-webkit-text-stroke:0.55px #5e5873;">DESCRIPTION (FI)</span>
<svg style="left:1163.0px;top:1311.3px;" width="11.0" height="6.5" viewBox="0 0 11.0 6.5"><path d="M0.75,5.75 L5.5,0.75 L10.25,5.75" fill="none" stroke="#625c77" stroke-width="1.5" stroke-linecap="round" stroke-linejoin="round"/></svg>
<svg style="left:1163.0px;top:1329.2px;" width="11.0" height="6.5" viewBox="0 0 11.0 6.5"><path d="M0.75,0.75 L5.5,5.75 L10.25,0.75" fill="none" stroke="#bfbdc9" stroke-width="1.5" stroke-linecap="round" stroke-linejoin="round"/></svg>
<span class="t" style="left:1226.19px;top:1316.00px;font-size:17.1px;color:#5e5873;font-weight:400;letter-spacing:1.388px;transform:scaleX(1.1000);-webkit-text-stroke:0.55px #5e5873;">VERD. CODE</span>
<svg style="left:1376.5px;top:1311.3px;" width="11.0" height="6.5" viewBox="0 0 11.0 6.5"><path d="M0.75,5.75 L5.5,0.75 L10.25,5.75" fill="none" stroke="#625c77" stroke-width="1.5" stroke-linecap="round" stroke-linejoin="round"/></svg>
<svg style="left:1376.5px;top:1329.2px;" width="11.0" height="6.5" viewBox="0 0 11.0 6.5"><path d="M0.75,0.75 L5.5,5.75 L10.25,0.75" fill="none" stroke="#bfbdc9" stroke-width="1.5" stroke-linecap="round" stroke-linejoin="round"/></svg>
<span class="t" style="left:1439.19px;top:1316.00px;font-size:17.1px;color:#5e5873;font-weight:400;letter-spacing:1.512px;transform:scaleX(1.1000);-webkit-text-stroke:0.55px #5e5873;">VERDICT DESCRIPTION (FI)</span>
<svg style="left:1777.0px;top:1311.3px;" width="11.0" height="6.5" viewBox="0 0 11.0 6.5"><path d="M0.75,5.75 L5.5,0.75 L10.25,5.75" fill="none" stroke="#625c77" stroke-width="1.5" stroke-linecap="round" stroke-linejoin="round"/></svg>
<svg style="left:1777.0px;top:1329.2px;" width="11.0" height="6.5" viewBox="0 0 11.0 6.5"><path d="M0.75,0.75 L5.5,5.75 L10.25,0.75" fill="none" stroke="#bfbdc9" stroke-width="1.5" stroke-linecap="round" stroke-linejoin="round"/></svg>
<span class="t" style="left:1839.69px;top:1316.00px;font-size:17.1px;color:#5e5873;font-weight:400;letter-spacing:1.952px;transform:scaleX(1.1000);-webkit-text-stroke:0.55px #5e5873;">VIEW</span>
<span class="t" style="left:1943.26px;top:1316.00px;font-size:17.1px;color:#5e5873;font-weight:400;letter-spacing:1.964px;transform:scaleX(1.1000);-webkit-text-stroke:0.55px #5e5873;">EDIT</span>
<div style="left:193px;top:1447.0px;width:1841px;height:3.0px;background:#ebe9f1;"></div>
<div style="left:233px;top:1387.0px;width:27px;height:27.0px;box-sizing:border-box;border:2px solid #d8d6de;border-radius:5px;background:#fff;"></div>
<span class="t" style="left:306.93px;top:1392.00px;font-size:20.9px;color:#7d7a8b;font-weight:400;letter-spacing:0.000px;transform:scaleX(1.0713);">2020-12-15T00:00:00+02:00</span>
<span class="t" style="left:658.39px;top:1392.00px;font-size:20.9px;color:#7d7a8b;font-weight:400;letter-spacing:0.000px;transform:scaleX(1.0069);">CD12355</span>
<span class="t" style="left:811.13px;top:1376.00px;font-size:20.9px;color:#7d7a8b;font-weight:400;letter-spacing:0.745px;transform:scaleX(1.1000);">Description for the code written</span>
<span class="t" style="left:811.46px;top:1408.00px;font-size:20.9px;color:#7d7a8b;font-weight:400;letter-spacing:0.670px;transform:scaleX(1.1000);">in Finnish</span>
<span class="t" style="left:1225.40px;top:1392.00px;font-size:20.9px;color:#7d7a8b;font-weight:400;letter-spacing:-0.000px;transform:scaleX(1.0322);">VC12345455</span>
<span class="t" style="left:1436.63px;top:1376.00px;font-size:20.9px;color:#7d7a8b;font-weight:400;letter-spacing:0.629px;transform:scaleX(1.1000);">Description for the verdict code</span>
<span class="t" style="left:1438.50px;top:1408.00px;font-size:20.9px;color:#7d7a8b;font-weight:400;letter-spacing:0.719px;transform:scaleX(1.1000);">written in Finnish</span>
<svg style="left:1854.9px;top:1387.9px;" width="26.2" height="26.2" viewBox="0 0 24 24"><path d="M12 4.5C7 4.5 2.73 7.61 1 12c1.73 4.39 6 7.5 11 7.5s9.27-3.11 11-7.5c-1.73-4.39-6-7.5-11-7.5zM12 17c-2.76 0-5-2.24-5-5s2.24-5 5-5 5 2.24 5 5-2.24 5-5 5zm0-8c-1.66 0-3 1.34-3 3s1.34 3 3 3 3-1.34 3-3-1.34-3-3-3z" fill="#7367f0"/></svg>
<svg style="left:1952.7px;top:1384.7px;" width="32.6" height="32.6" viewBox="0 0 24 24"><path d="M3 17.25V21h3.75L17.81 9.94l-3.75-3.75L3 17.25zM20.71 7.04c.39-.39.39-1.02 0-1.41l-2.34-2.34c-.39-.39-1.02-.39-1.41 0l-1.83 1.83 3.75 3.75 1.83-1.83z" fill="#7367f0"/></svg>
<div style="left:193px;top:1541.3px;width:1841px;height:3.0px;background:#ebe9f1;"></div>
<div style="left:233px;top:1481.3px;width:27px;height:27.0px;box-sizing:border-box;border:2px solid #d8d6de;border-radius:5px;background:#fff;"></div>
<span class="t" style="left:306.93px;top:1486.00px;font-size:20.9px;color:#7d7a8b;font-weight:400;letter-spacing:0.000px;transform:scaleX(1.0713);">2020-12-15T00:00:00+02:00</span>
<span class="t" style="left:658.39px;top:1486.00px;font-size:20.9px;color:#7d7a8b;font-weight:400;letter-spacing:0.000px;transform:scaleX(1.0069);">CD12355</span>
<span class="t" style="left:811.13px;top:1470.00px;font-size:20.9px;color:#7d7a8b;font-weight:400;letter-spacing:0.745px;transform:scaleX(1.1000);">Description for the code written</span>
<span class="t" style="left:811.46px;top:1502.00px;font-size:20.9px;color:#7d7a8b;font-weight:400;letter-spacing:0.670px;transform:scaleX(1.1000);">in Finnish</span>
<span class="t" style="left:1225.40px;top:1486.00px;font-size:20.9px;color:#7d7a8b;font-weight:400;letter-spacing:-0.000px;transform:scaleX(1.0322);">VC12345455</span>
<span class="t" style="left:1436.63px;top:1470.00px;font-size:20.9px;color:#7d7a8b;font-weight:400;letter-spacing:0.629px;transform:scaleX(1.1000);">Description for the verdict code</span>
<span class="t" style="left:1438.50px;top:1502.00px;font-size:20.9px;color:#7d7a8b;font-weight:400;letter-spacing:0.719px;transform:scaleX(1.1000);">written in Finnish</span>
<svg style="left:1854.9px;top:1482.2px;" width="26.2" height="26.2" viewBox="0 0 24 24"><path d="M12 4.5C7 4.5 2.73 7.61 1 12c1.73 4.39 6 7.5 11 7.5s9.27-3.11 11-7.5c-1.73-4.39-6-7.5-11-7.5zM12 17c-2.76 0-5-2.24-5-5s2.24-5 5-5 5 2.24 5 5-2.24 5-5 5zm0-8c-1.66 0-3 1.34-3 3s1.34 3 3 3 3-1.34 3-3-1.34-3-3-3z" fill="#7367f0"/></svg>
<svg style="left:1952.7px;top:1479.0px;" width="32.6" height="32.6" viewBox="0 0 24 24"><path d="M3 17.25V21h3.75L17.81 9.94l-3.75-3.75L3 17.25zM20.71 7.04c.39-.39.39-1.02 0-1.41l-2.34-2.34c-.39-.39-1.02-.39-1.41 0l-1.83 1.83 3.75 3.75 1.83-1.83z" fill="#7367f0"/></svg>
<div style="left:193px;top:1635.6px;width:1841px;height:3.0px;background:#ebe9f1;"></div>
<div style="left:233px;top:1575.6px;width:27px;height:27.0px;box-sizing:border-box;border:2px solid #d8d6de;border-radius:5px;background:#fff;"></div>
<span class="t" style="left:306.93px;top:1581.00px;font-size:20.9px;color:#7d7a8b;font-weight:400;letter-spacing:0.000px;transform:scaleX(1.0713);">2020-12-15T00:00:00+02:00</span>
<span class="t" style="left:658.39px;top:1581.00px;font-size:20.9px;color:#7d7a8b;font-weight:400;letter-spacing:0.000px;transform:scaleX(1.0069);">CD12355</span>
<span class="t" style="left:811.13px;top:1565.00px;font-size:20.9px;color:#7d7a8b;font-weight:400;letter-spacing:0.745px;transform:scaleX(1.1000);">Description for the code written</span>
<span class="t" style="left:811.46px;top:1597.00px;font-size:20.9px;color:#7d7a8b;font-weight:400;letter-spacing:0.670px;transform:scaleX(1.1000);">in Finnish</span>
<span class="t" style="left:1225.40px;top:1581.00px;font-size:20.9px;color:#7d7a8b;font-weight:400;letter-spacing:-0.000px;transform:scaleX(1.0322);">VC12345455</span>
<span class="t" style="left:1436.63px;top:1565.00px;font-size:20.9px;color:#7d7a8b;font-weight:400;letter-spacing:0.629px;transform:scaleX(1.1000);">Description for the verdict code</span>
<span class="t" style="left:1438.50px;top:1597.00px;font-size:20.9px;color:#7d7a8b;font-weight:400;letter-spacing:0.719px;transform:scaleX(1.1000);">written in Finnish</span>
<svg style="left:1854.9px;top:1576.5px;" width="26.2" height="26.2" viewBox="0 0 24 24"><path d="M12 4.5C7 4.5 2.73 7.61 1 12c1.73 4.39 6 7.5 11 7.5s9.27-3.11 11-7.5c-1.73-4.39-6-7.5-11-7.5zM12 17c-2.76 0-5-2.24-5-5s2.24-5 5-5 5 2.24 5 5-2.24 5-5 5zm0-8c-1.66 0-3 1.34-3 3s1.34 3 3 3 3-1.34 3-3-1.34-3-3-3z" fill="#7367f0"/></svg>
<svg style="left:1952.7px;top:1573.3px;" width="32.6" height="32.6" viewBox="0 0 24 24"><path d="M3 17.25V21h3.75L17.81 9.94l-3.75-3.75L3 17.25zM20.71 7.04c.39-.39.39-1.02 0-1.41l-2.34-2.34c-.39-.39-1.02-.39-1.41 0l-1.83 1.83 3.75 3.75 1.83-1.83z" fill="#7367f0"/></svg>
</div></body></html>
